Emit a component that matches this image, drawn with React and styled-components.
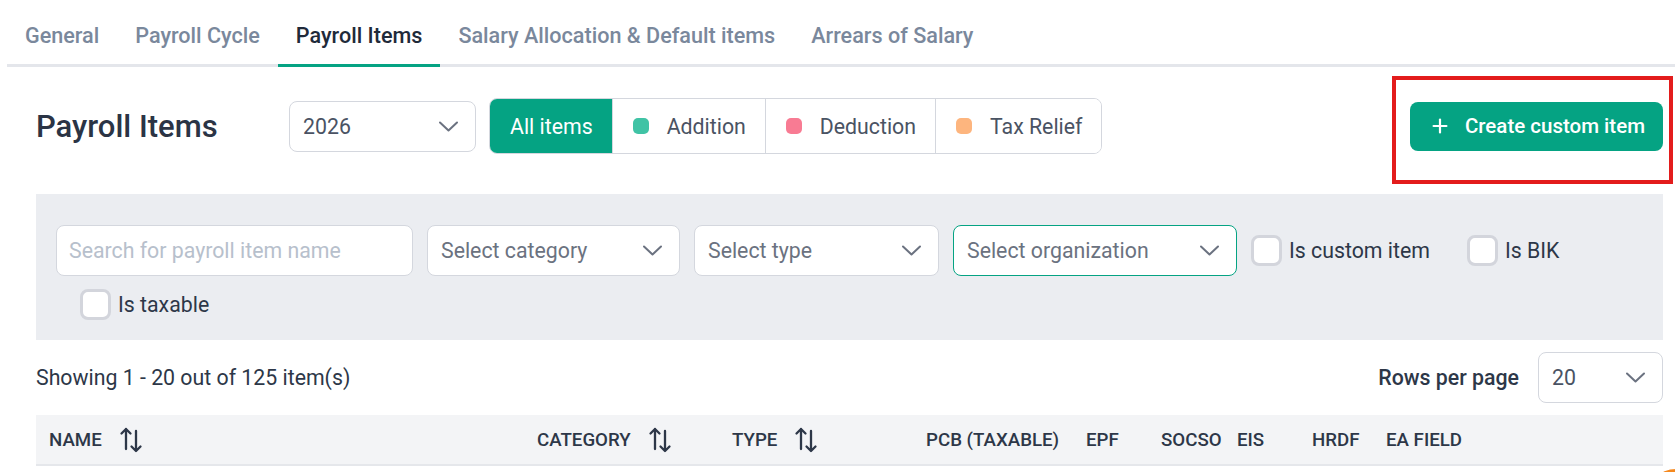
import styled, { createGlobalStyle } from "styled-components";
import { Plus } from "lucide-react";

const GlobalStyle = createGlobalStyle`
  * {
    box-sizing: border-box;
  }
  body {
    margin: 0;
    background: #fff;
    font-family: Roboto, "Liberation Sans", Arial, sans-serif;
    color: #2d3748;
  }
`;

const GREEN = "#05a383";
const BORDER = "#d4d7de";

const Page = styled.div`
  width: 1675px;
`;

const TabBar = styled.nav`
  display: flex;
  margin-left: 7px;
  border-bottom: 3px solid #e4e6eb;
`;

const Tab = styled.div`
  padding: 22px 18px 14px;
  margin-bottom: -3px;
  font-size: 21.6px;
  line-height: 28px;
  font-weight: 500;
  white-space: nowrap;
  color: ${(p) => (p.$active ? "#1f2a3a" : "#7a889c")};
  border-bottom: 3px solid ${(p) => (p.$active ? GREEN : "transparent")};
`;

const Main = styled.main`
  padding: 0 12px 0 36px;
`;

const HeaderRow = styled.div`
  display: flex;
  align-items: center;
  height: 56px;
  margin-top: 31px;
`;

const Title = styled.h1`
  width: 253px;
  margin: 0;
  font-size: 31px;
  font-weight: 500;
  color: #2b3445;
`;

const SelectBox = styled.div`
  display: flex;
  align-items: center;
  justify-content: space-between;
  width: ${(p) => p.$width}px;
  height: 51px;
  padding: 0 17px 0 13px;
  background: #fff;
  border: 1px solid ${(p) => (p.$focused ? GREEN : BORDER)};
  border-radius: 8px;
  font-size: 21.3px;
  font-weight: 400;
  white-space: nowrap;
  color: ${(p) => (p.$dark ? "#4a5363" : "#6b7280")};
`;

const Segmented = styled.div`
  display: flex;
  height: 56px;
  margin-left: 13px;
  border: 1px solid ${BORDER};
  border-radius: 8px;
  overflow: hidden;
`;

const Segment = styled.div`
  display: flex;
  align-items: center;
  gap: 18px;
  padding: 0 19px 0 20px;
  font-size: 21.3px;
  white-space: nowrap;
  color: ${(p) => (p.$active ? "#fff" : "#4a5363")};
  background: ${(p) => (p.$active ? GREEN : "#fff")};
  & + & {
    border-left: 1px solid ${BORDER};
  }
`;

const Dot = styled.span`
  width: 16px;
  height: 16px;
  border-radius: 5px;
  background: ${(p) => p.$color};
`;

const Spacer = styled.div`
  flex: 1;
`;

const CreateWrap = styled.div`
  position: relative;
`;

const CreateButton = styled.button`
  display: flex;
  align-items: center;
  gap: 14px;
  height: 49px;
  padding: 0 18px 0 19px;
  border: none;
  border-radius: 8px;
  background: ${GREEN};
  color: #fff;
  font-family: inherit;
  font-size: 20.5px;
  font-weight: 500;
  white-space: nowrap;
`;

const Highlight = styled.span`
  position: absolute;
  top: -26px;
  left: -18px;
  right: -10px;
  bottom: -33px;
  border: 4px solid #e31c1c;
  pointer-events: none;
`;

const FilterPanel = styled.section`
  display: flex;
  flex-wrap: wrap;
  align-items: center;
  column-gap: 14px;
  row-gap: 13px;
  margin-top: 40px;
  padding: 31px 20px 20px;
  background: #ebedf1;
`;

const SearchInput = styled.input`
  width: 357px;
  height: 51px;
  padding: 0 12px;
  border: 1px solid ${BORDER};
  border-radius: 8px;
  font-family: inherit;
  font-size: 21.3px;
  color: #2d3748;
  &::placeholder {
    color: #b7c0cc;
  }
`;

const CheckItem = styled.label`
  display: flex;
  align-items: center;
  gap: 7px;
  margin-left: ${(p) => p.$indent || 0}px;
  margin-right: 23px;
  font-size: 21.3px;
  color: #2d3748;
`;

const Box = styled.span`
  width: 31px;
  height: 31px;
  border: 3px solid #d3d5dc;
  border-radius: 8px;
  background: #fff;
`;

const ShowingRow = styled.div`
  display: flex;
  align-items: center;
  justify-content: space-between;
  margin-top: 12px;
`;

const Showing = styled.span`
  font-size: 21.3px;
  color: #2d3748;
`;

const RowsPer = styled.div`
  display: flex;
  align-items: center;
  gap: 19px;
  font-size: 21.3px;
  font-weight: 500;
  color: #2d3748;
`;

const TableHead = styled.div`
  display: grid;
  grid-template-columns: 488px 195px 194px 160px 75px 76px 75px 74px 1fr;
  align-items: center;
  height: 51px;
  margin-top: 12px;
  padding-left: 13px;
  background: #f3f4f6;
  border-bottom: 2px solid #e5e7eb;
`;

const HeadCell = styled.div`
  display: flex;
  align-items: center;
  gap: 17px;
  font-size: 18.7px;
  font-weight: 500;
  text-transform: uppercase;
  white-space: nowrap;
  color: #2d3748;
`;

/* floating help bubble pinned to the lower-right corner */
const HelpBubble = styled.div`
  position: fixed;
  left: 1646px;
  top: 469px;
  width: 60px;
  height: 60px;
  border-radius: 50%;
  background: #f5891f;
`;

function Chevron() {
  return (
    <svg width="19" height="11" viewBox="0 0 19 11" fill="none">
      <polyline
        points="1,1.5 9.5,9.5 18,1.5"
        stroke="#6b7280"
        strokeWidth="2"
        strokeLinecap="round"
        strokeLinejoin="round"
      />
    </svg>
  );
}

function SortIcon() {
  return (
    <svg width="24" height="26" viewBox="0 0 24 26" fill="none">
      <g stroke="#2d3748" strokeWidth="2.3" strokeLinecap="round" strokeLinejoin="round">
        <path d="M7 2v20M2.5 6.5 7 2l4.5 4.5" />
        <path d="M17 4v20M12.5 19.5 17 24l4.5-4.5" />
      </g>
    </svg>
  );
}

function Select({ width, children, focused, dark }) {
  return (
    <SelectBox $width={width} $focused={focused} $dark={dark}>
      <span>{children}</span>
      <Chevron />
    </SelectBox>
  );
}

const tabs = [
  "General",
  "Payroll Cycle",
  "Payroll Items",
  "Salary Allocation & Default items",
  "Arrears of Salary",
];

const segments = [
  { label: "Addition", color: "#40c3a5" },
  { label: "Deduction", color: "#f87b93" },
  { label: "Tax Relief", color: "#fdb57e" },
];

const columns = [
  { label: "Name", sort: true },
  { label: "Category", sort: true },
  { label: "Type", sort: true },
  { label: "PCB (taxable)" },
  { label: "EPF" },
  { label: "SOCSO" },
  { label: "EIS" },
  { label: "HRDF" },
  { label: "EA Field" },
];

export default function App() {
  return (
    <Page>
      <GlobalStyle />
      <TabBar>
        {tabs.map((t) => (
          <Tab key={t} $active={t === "Payroll Items"}>
            {t}
          </Tab>
        ))}
      </TabBar>

      <Main>
        <HeaderRow>
          <Title>Payroll Items</Title>
          <Select width={187} dark>
            2026
          </Select>
          <Segmented>
            <Segment $active>All items</Segment>
            {segments.map((s) => (
              <Segment key={s.label}>
                <Dot $color={s.color} />
                {s.label}
              </Segment>
            ))}
          </Segmented>
          <Spacer />
          <CreateWrap>
            <CreateButton>
              <Plus size={22} strokeWidth={2.4} />
              Create custom item
            </CreateButton>
            <Highlight />
          </CreateWrap>
        </HeaderRow>

        <FilterPanel>
          <SearchInput placeholder="Search for payroll item name" />
          <Select width={253}>Select category</Select>
          <Select width={245}>Select type</Select>
          <Select width={284} focused>
            Select organization
          </Select>
          <CheckItem>
            <Box />
            Is custom item
          </CheckItem>
          <CheckItem>
            <Box />
            Is BIK
          </CheckItem>
          <CheckItem $indent={24}>
            <Box />
            Is taxable
          </CheckItem>
        </FilterPanel>

        <ShowingRow>
          <Showing>Showing 1 - 20 out of 125 item(s)</Showing>
          <RowsPer>
            Rows per page
            <Select width={125} dark>
              20
            </Select>
          </RowsPer>
        </ShowingRow>

        <TableHead>
          {columns.map((c) => (
            <HeadCell key={c.label}>
              {c.label}
              {c.sort && <SortIcon />}
            </HeadCell>
          ))}
        </TableHead>
      </Main>
      <HelpBubble />
    </Page>
  );
}
